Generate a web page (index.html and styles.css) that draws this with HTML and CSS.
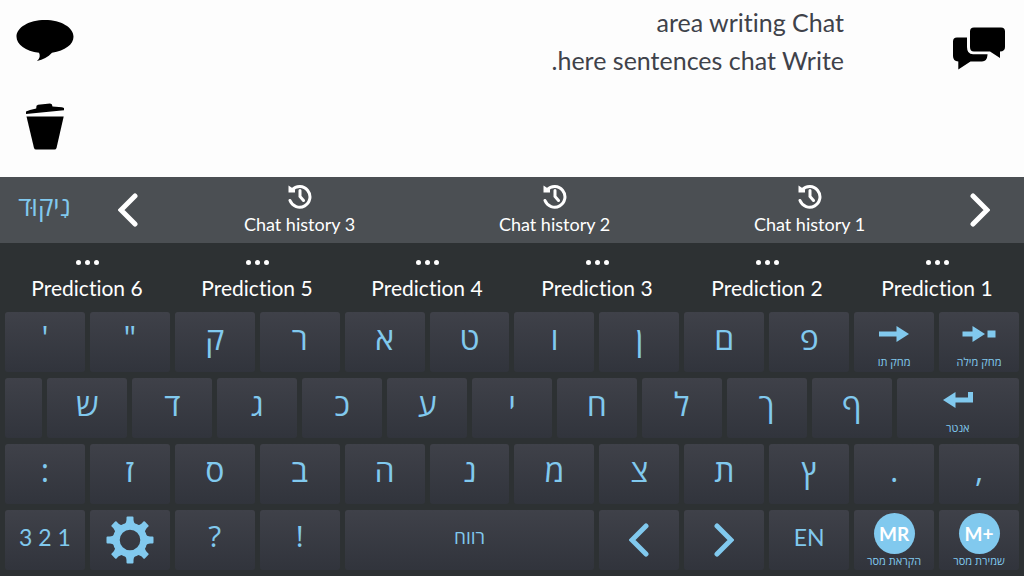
FILE: index.html
```html
<!DOCTYPE html>
<html lang="he">

<head>
  <meta charset="UTF-8">
  <meta name="viewport" content="width=device-width, initial-scale=1.0">
  <title>Chat keyboard</title>
  <link rel="stylesheet" href="styles.css">
</head>

<body>
  <div class="writing">
    <div class="tools">
      <button class="tool" aria-label="Speak">
        <svg width="58" height="42" viewBox="0 0 58 42"><path d="M29 0C13 0 0.500 7.500 0.500 16.700C0.500 24.500 9.500 31 23 32.800C24.300 35.500 24 38.500 21 41C27 40 32 37 36 32.800C49 30.500 57.500 24.500 57.500 16.700C57.500 7.500 45 0 29 0Z"/></svg>
      </button>
      <button class="tool" aria-label="Clear">
        <svg width="38" height="47" viewBox="0 0 38 47"><path d="M0 11V8.500L4 7L10.200 5.500L10.500 2.800L12 1.800L24 0.500L25.800 1.200L26.500 3.600L36 4.300L38 5V7.200Z"/><path d="M0.500 13.500H37.700L30.500 45Q30 46.500 28.500 46.500H10Q8.500 46.500 8 45Z"/></svg>
      </button>
    </div>
    <textarea class="text" aria-label="Chat writing area">area writing Chat
.here sentences chat Write</textarea>
    <button class="chats" aria-label="Chats">
      <svg width="52" height="43" viewBox="0 0 52 43"><path d="M4 10.500H14V20Q14 27.300 20 27.300H34.500V28Q34 34.500 29 34.500H17.500L5.300 42.500V34.500Q0 34 0 29V14.500Q0 10.500 4 10.500Z"/><path d="M21 0.500H48Q52 0.500 52 4.500V20Q52 24.300 47 24.500V31L37 24.500H21Q17 24.500 17 20V4.500Q17 0.500 21 0.500Z"/></svg>
    </button>
  </div>

  <div class="history">
    <button class="nikud">נִיקוּד</button>
    <button class="prev" aria-label="Next"><svg width="20" height="34" viewBox="0 0 20 34"><path class="chevron" d="M17 3L3 17L17 31"/></svg></button>
    <button class="item">
      <svg width="24" height="25" viewBox="0 0 24 25"><path class="clock" d="M4 6A10.300 10.300 0 1 1 2 16.500M12 6.500V12.500L15.500 16.500"/><path class="fill" d="M0.500 1.500L3.500 3.500L7 5.500V8.500H0.500Z"/></svg>
      Chat history 3
    </button>
    <button class="item">
      <svg width="24" height="25" viewBox="0 0 24 25"><path class="clock" d="M4 6A10.300 10.300 0 1 1 2 16.500M12 6.500V12.500L15.500 16.500"/><path class="fill" d="M0.500 1.500L3.500 3.500L7 5.500V8.500H0.500Z"/></svg>
      Chat history 2
    </button>
    <button class="item">
      <svg width="24" height="25" viewBox="0 0 24 25"><path class="clock" d="M4 6A10.300 10.300 0 1 1 2 16.500M12 6.500V12.500L15.500 16.500"/><path class="fill" d="M0.500 1.500L3.500 3.500L7 5.500V8.500H0.500Z"/></svg>
      Chat history 1
    </button>
    <button class="last" aria-label="Previous"><svg width="20" height="34" viewBox="0 0 20 34"><path class="chevron" d="M3 3L17 17L3 31"/></svg></button>
  </div>

  <div class="predictions">
    <button><span class="dots"><i></i><i></i><i></i></span>Prediction 6</button>
    <button><span class="dots"><i></i><i></i><i></i></span>Prediction 5</button>
    <button><span class="dots"><i></i><i></i><i></i></span>Prediction 4</button>
    <button><span class="dots"><i></i><i></i><i></i></span>Prediction 3</button>
    <button><span class="dots"><i></i><i></i><i></i></span>Prediction 2</button>
    <button><span class="dots"><i></i><i></i><i></i></span>Prediction 1</button>
  </div>

  <div class="keyboard">
    <button class="key">'</button>
    <button class="key">"</button>
    <button class="key">ק</button>
    <button class="key">ר</button>
    <button class="key">א</button>
    <button class="key">ט</button>
    <button class="key">ו</button>
    <button class="key">ן</button>
    <button class="key">ם</button>
    <button class="key">פ</button>
    <button class="key action">
      <svg width="30" height="16" viewBox="0 0 30 16"><path d="M0 5.500H17.500V0L30 8L17.500 16V10.500H0Z"/></svg>
      <span>מחק תו</span>
    </button>
    <button class="key action">
      <svg width="34" height="16" viewBox="0 0 34 16"><path d="M0.500 5.500H10.500V0L23 8L10.500 16V10.500H0.500ZM25.500 4.500H33.500V11.500H25.500Z"/></svg>
      <span>מחק מילה</span>
    </button>

    <button class="key half" aria-label="Blank"></button>
    <button class="key">ש</button>
    <button class="key">ד</button>
    <button class="key">ג</button>
    <button class="key">כ</button>
    <button class="key">ע</button>
    <button class="key">י</button>
    <button class="key">ח</button>
    <button class="key">ל</button>
    <button class="key">ך</button>
    <button class="key">ף</button>
    <button class="key action enter">
      <svg width="30" height="16" viewBox="0 0 30 16"><path d="M0 8L12.500 0V5.500H25V0H30V10.500H12.500V16Z"/></svg>
      <span>אנטר</span>
    </button>

    <button class="key">:</button>
    <button class="key">ז</button>
    <button class="key">ס</button>
    <button class="key">ב</button>
    <button class="key">ה</button>
    <button class="key">נ</button>
    <button class="key">מ</button>
    <button class="key">צ</button>
    <button class="key">ת</button>
    <button class="key">ץ</button>
    <button class="key">.</button>
    <button class="key">,</button>

    <button class="key latin">3 2 1</button>
    <button class="key icon" aria-label="Settings">
      <svg width="48" height="48" viewBox="-24 -24 48 48">
        <circle class="ring" r="13.800"/>
        <path id="tooth" d="M-5.500 -15Q-3.500 -18 -3.500 -20V-22.500Q-3.500 -23.500 -2.500 -23.500H2.500Q3.500 -23.500 3.500 -22.500V-20Q3.500 -18 5.500 -15Z"/>
        <use href="#tooth" transform="rotate(45)"/>
        <use href="#tooth" transform="rotate(90)"/>
        <use href="#tooth" transform="rotate(135)"/>
        <use href="#tooth" transform="rotate(180)"/>
        <use href="#tooth" transform="rotate(225)"/>
        <use href="#tooth" transform="rotate(270)"/>
        <use href="#tooth" transform="rotate(315)"/>
      </svg>
    </button>
    <button class="key mark">?</button>
    <button class="key mark">!</button>
    <button class="key space">רווח</button>
    <button class="key icon" aria-label="Left"><svg width="20" height="34" viewBox="0 0 20 34"><path class="chevron" d="M17 3L3 17L17 31"/></svg></button>
    <button class="key icon" aria-label="Right"><svg width="20" height="34" viewBox="0 0 20 34"><path class="chevron" d="M3 3L17 17L3 31"/></svg></button>
    <button class="key latin">EN</button>
    <button class="key memory"><b>MR</b><span>הקראת מסר</span></button>
    <button class="key memory"><b>M+</b><span>שמירת מסר</span></button>
  </div>
</body>

</html>
```
FILE: styles.css
```css
* {
  box-sizing: border-box;
}

body {
  display: flex;
  flex-direction: column;
  min-height: 100vh;
  margin: 0;
  font-family: Lato, "Open Sans", sans-serif;
  font-variant-ligatures: none;
  background: #2d3133;
}

button {
  display: flex;
  flex-direction: column;
  align-items: center;
  justify-content: center;
  min-width: 0;
  padding: 0;
  border: 0;
  background: none;
  color: white;
  font-family: inherit;
  font-variant-ligatures: none;
  cursor: pointer;
}

svg {
  display: block;
  fill: currentColor;
}

.writing {
  display: flex;
  flex: 1;
  min-height: 177px;
  background: #fdfdfd;
}

.tools {
  width: 89px;
}

.tool {
  width: 100%;
  height: 86px;
  padding-bottom: 5px;
  color: black;
}

.text {
  flex: 1;
  min-width: 0;
  padding: 3px 0;
  border: 0;
  outline: 0;
  resize: none;
  background: none;
  color: #3f424a;
  font-family: inherit;
  font-size: 25px;
  font-variant-ligatures: none;
  line-height: 38px;
  text-align: right;
}

.chats {
  justify-content: flex-start;
  width: 180px;
  padding: 27px 19px;
  align-items: flex-end;
  color: black;
}

.history {
  display: grid;
  grid-template-columns: repeat(12, 1fr);
  height: 66px;
  padding: 0 2px;
  background: #4b4f53;
}

.nikud {
  padding-bottom: 8px;
  color: #81c9ee;
  font-family: "Open Sans", sans-serif;
  font-size: 26px;
}

.prev {
  padding-right: 4px;
}

.item {
  grid-column: span 3;
  gap: 4px;
  padding-bottom: 1px;
  font-size: 18px;
  line-height: 22px;
}

.last {
  grid-column: 12;
}

.chevron {
  fill: none;
  stroke: currentColor;
  stroke-width: 5;
  stroke-linecap: round;
}

.clock {
  fill: none;
  stroke: currentColor;
  stroke-width: 3;
  stroke-linecap: round;
}

.predictions {
  display: grid;
  grid-template-columns: repeat(6, 1fr);
  height: 69px;
  padding: 0 2px;
}

.predictions button {
  gap: 11px;
  justify-content: flex-start;
  padding-top: 17px;
  font-size: 21px;
  line-height: 24px;
}

.dots {
  display: flex;
  gap: 4px;
}

.dots i {
  width: 5px;
  height: 5px;
  border-radius: 50%;
  background: white;
}

.keyboard {
  display: grid;
  grid-template-columns: repeat(24, 1fr);
  grid-auto-rows: 60px;
  gap: 6px 5px;
  padding: 0 5px 6px;
}

.key {
  grid-column: span 2;
  padding-bottom: 9px;
  border-radius: 3px;
  background: linear-gradient(#3f4149, #31343c);
  color: #81c9ee;
  font-family: "Open Sans", sans-serif;
  font-size: 32px;
  line-height: 50px;
}

.half {
  grid-column: span 1;
}

.enter {
  grid-column: span 3;
}

.space {
  grid-column: span 6;
  padding-bottom: 6px;
  font-size: 19px;
}

.latin {
  padding-bottom: 6px;
  font-family: Lato, sans-serif;
  font-size: 23px;
}

.mark {
  padding-bottom: 8px;
  font-size: 30px;
}

.icon {
  padding-bottom: 0;
}

.ring {
  fill: none;
  stroke: currentColor;
  stroke-width: 7;
}

.action,
.memory {
  justify-content: flex-start;
  padding: 14px 0 0;
  font-size: 11px;
  line-height: 14px;
}

.action {
  gap: 13px;
}

.memory {
  gap: 0;
  padding-top: 3px;
}

.memory b {
  width: 41px;
  height: 41px;
  border-radius: 50%;
  background: #81c9ee;
  color: white;
  font-family: Lato, sans-serif;
  font-size: 19px;
  line-height: 41px;
}
```
